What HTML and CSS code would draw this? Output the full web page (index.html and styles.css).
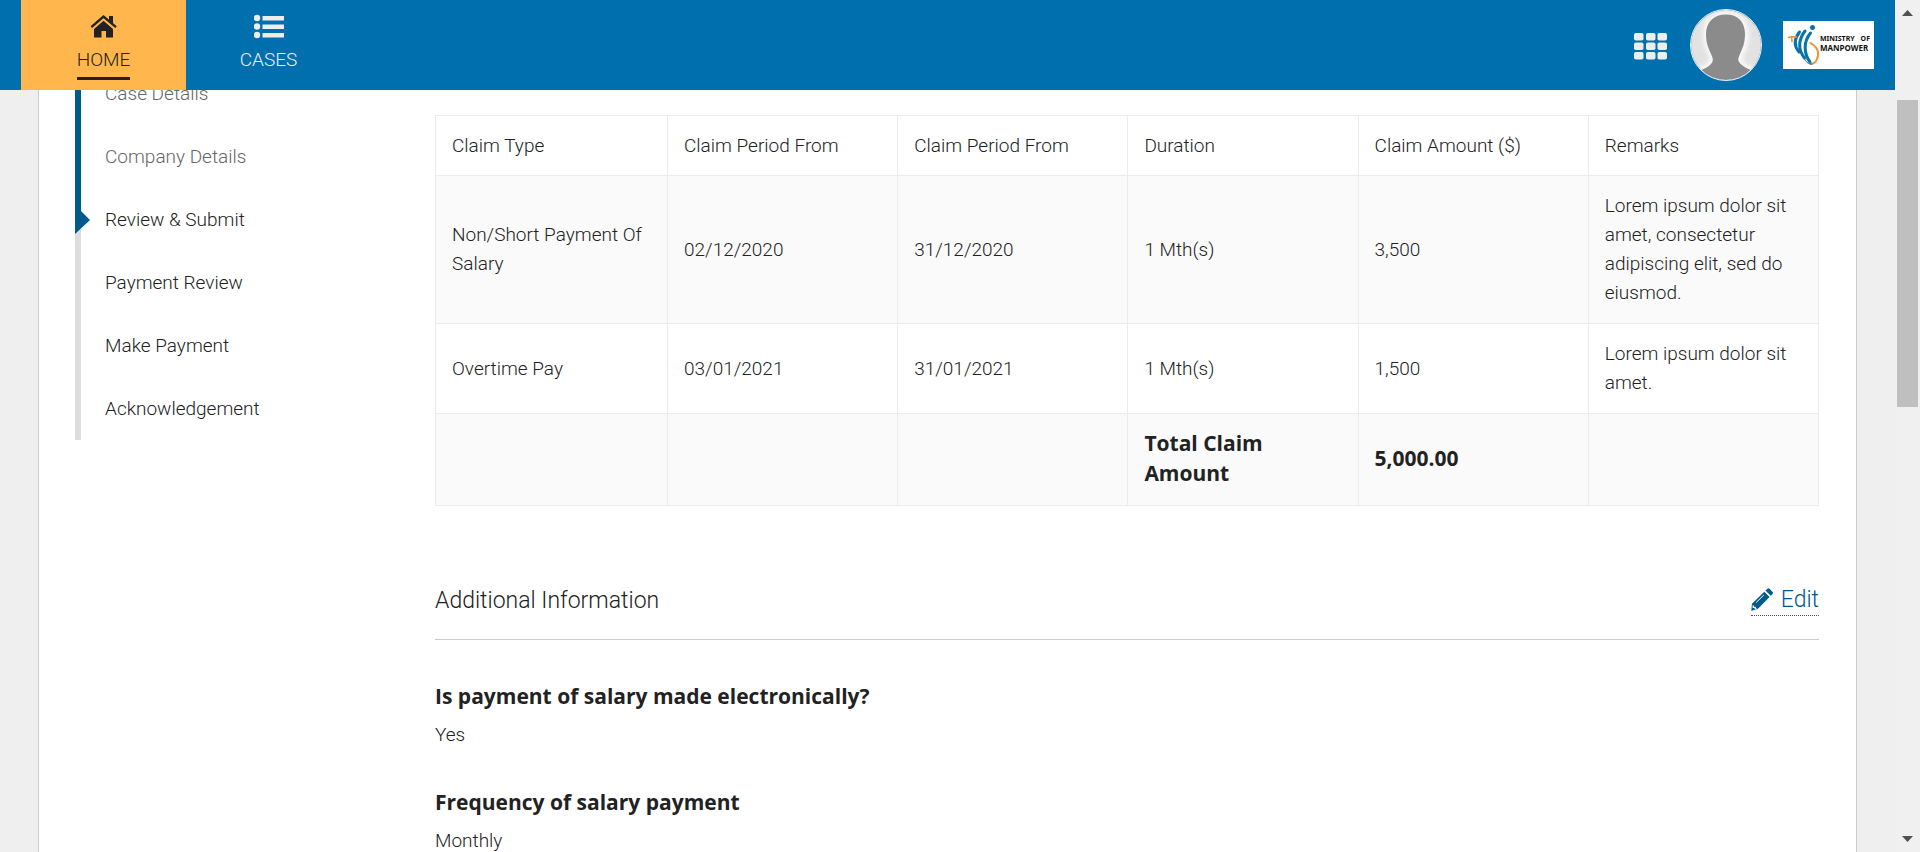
FILE: index.html
```html
<!DOCTYPE html>
<html lang="en">
<head>
<meta charset="utf-8">
<meta name="viewport" content="width=device-width, initial-scale=1">
<title>Review &amp; Submit</title>
<link rel="stylesheet" href="styles.css">
</head>
<body>
<div class="app">
  <header class="topbar">
    <nav class="tabs" aria-label="Main">
      <a class="tab tab-active" href="#home">
        <svg class="tab-icon" viewBox="0 0 30 26" aria-hidden="true"><path fill="currentColor" d="M20 3h4v8l-4-3.800zM5 16 14.500 7.800 24 16V24.500H17V18h-4.500v6.500H5z"/><path d="M2.300 14.200 14.500 3.700 27 14.200" fill="none" stroke="currentColor" stroke-width="2.400"/><path d="M3.500 16 14.500 6.400 25.500 16" fill="none" stroke="#ffb74d" stroke-width="1"/></svg>
        <span class="tab-label">HOME</span>
      </a>
      <a class="tab" href="#cases">
        <svg class="tab-icon" viewBox="0 0 30 26" aria-hidden="true"><g fill="currentColor"><circle cx="3" cy="5" r="3.200"/><circle cx="3" cy="13.500" r="3.200"/><circle cx="3" cy="22" r="3.200"/><path d="M8.500 3H30v4.500H8.500zM8.500 11.500H30V16H8.500zM8.500 20H30v4.500H8.500z"/></g></svg>
        <span class="tab-label">CASES</span>
      </a>
    </nav>
    <div class="tools">
      <button class="icon-button" type="button" aria-label="Applications">
        <svg class="grid-icon" viewBox="0 0 33 27" aria-hidden="true"><g fill="#ededed"><rect width="9.500" height="7.500" rx="1.800"/><rect x="12" width="9.500" height="7.500" rx="1.800"/><rect x="23.500" width="9.500" height="7.500" rx="1.800"/><rect y="9.500" width="9.500" height="7.500" rx="1.800"/><rect x="12" y="9.500" width="9.500" height="7.500" rx="1.800"/><rect x="23.500" y="9.500" width="9.500" height="7.500" rx="1.800"/><rect y="19" width="9.500" height="7.500" rx="1.800"/><rect x="12" y="19" width="9.500" height="7.500" rx="1.800"/><rect x="23.500" y="19" width="9.500" height="7.500" rx="1.800"/></g></svg>
      </button>
      <button class="icon-button" type="button" aria-label="Profile">
        <svg class="avatar" viewBox="0 0 72 72" aria-hidden="true">
          <defs><clipPath id="face"><circle cx="36" cy="36" r="35"/></clipPath><filter id="halo"><feGaussianBlur stdDeviation="2.500"/></filter></defs>
          <g clip-path="url(#face)"><rect width="72" height="72" fill="#e2e2e2"/>
          <path filter="url(#halo)" fill="none" stroke="#fff" stroke-width="5" d="M36 5.500C24 5.500 16 13 16 24c0 11 3 17 5 21 3 5 2 8-1 11-3 3-10 4-14 9v11h60V65c-4-5-11-6-14-9-3-3-4-6-1-11 2-4 5-10 5-21C55 13 48 5.500 36 5.500z"/>
          <path fill="#8b8b8b" d="M36 5.500C24 5.500 16 13 16 25c0 10 3 15 5 20 3 6 2 8-1 11-2 2-6 4-10 5.500V74h52V61.500c-4-1.500-8-3.500-10-5.500-4-3-5-5-2-11 2-5 5-10 5-20C55 13 48 5.500 36 5.500z"/></g>
          <circle cx="36" cy="36" r="35.500" fill="none" stroke="#f4f4f4"/>
        </svg>
      </button>
      <a class="brand" href="#ministry">
        <svg class="brand-mark" viewBox="0 0 33 44" aria-hidden="true">
          <g fill="none" stroke="#0873a8" stroke-linecap="round" stroke-width="3">
            <path d="M13.500 9C8 16 8 23 13 29"/><path d="M19 8C12 17 12 27 18.500 35"/><path d="M24.500 10C17 19 18 31 24 39"/>
          </g>
          <path d="M6 19c0-4 0-5-1-5.500M2 14.800c3-2 6-.5 9-1" fill="none" stroke="#ef9138" stroke-width="1.700"/>
          <path d="M24.500 20c7 4 9 10 6.500 16-1.500 4-5 5-6.500 5" fill="none" stroke="#ef9138" stroke-width="2" stroke-linecap="round"/>
          <path d="M17.500 34c2 5 5 7.500 9 7" fill="none" stroke="#0873a8" stroke-width="1"/>
          <circle cx="26.500" cy="4.500" r="2.500" fill="#0873a8"/>
        </svg>
        <span class="brand-text"><span class="brand-top"><span>MINISTRY</span><span>OF</span></span><span class="brand-name">MANPOWER</span></span>
      </a>
    </div>
  </header>

  <div class="panel">
    <nav class="side" aria-label="Progress">
      <ol class="steps">
        <li class="step step-done"><a href="#case">Case Details</a></li>
        <li class="step step-done"><a href="#company">Company Details</a></li>
        <li class="step step-current" aria-current="step"><a href="#review">Review &amp; Submit</a><svg class="pointer" viewBox="0 0 15 46" aria-hidden="true"><path fill="#005a8c" d="M0 0H6V23L15 32 0 46z"/></svg></li>
        <li class="step"><a href="#payment">Payment Review</a></li>
        <li class="step"><a href="#pay">Make Payment</a></li>
        <li class="step"><a href="#ack">Acknowledgement</a></li>
      </ol>
    </nav>
    <main class="content">
      <table class="claims">
        <thead>
          <tr><th scope="col">Claim Type</th><th scope="col">Claim Period From</th><th scope="col">Claim Period From</th><th scope="col">Duration</th><th scope="col">Claim Amount ($)</th><th scope="col">Remarks</th></tr>
        </thead>
        <tbody>
          <tr><td>Non/Short Payment Of Salary</td><td>02/12/2020</td><td>31/12/2020</td><td>1 Mth(s)</td><td>3,500</td><td>Lorem ipsum dolor sit amet, consectetur adipiscing elit, sed do eiusmod.</td></tr>
          <tr><td>Overtime Pay</td><td>03/01/2021</td><td>31/01/2021</td><td>1 Mth(s)</td><td>1,500</td><td>Lorem ipsum dolor sit amet.</td></tr>
          <tr class="total"><td></td><td></td><td></td><td>Total Claim Amount</td><td>5,000.00</td><td></td></tr>
        </tbody>
      </table>
      <section>
        <div class="section-head">
          <h2 class="section-title">Additional Information</h2>
          <a class="edit" href="#edit">
            <svg class="edit-icon" viewBox="0 0 22 23" aria-hidden="true"><path fill="#005a8c" d="M14.500 2.500 16.500.700q1-.900 2 0L21.600 4q.800 1 0 2L19.800 7.800zM13.300 3.700 18.600 9 6.500 21.200.300 22.700 1 15.800z"/><path d="M5.200 14.500 12.800 7" stroke="#fff" stroke-width="1"/><path d="M2.200 17.200v2.200h2v1.600h2" fill="none" stroke="#fff" stroke-width="1.200"/></svg>
            <span>Edit</span>
          </a>
        </div>
        <dl class="answers">
          <div class="answer"><dt>Is payment of salary made electronically?</dt><dd>Yes</dd></div>
          <div class="answer"><dt>Frequency of salary payment</dt><dd>Monthly</dd></div>
        </dl>
      </section>
    </main>
  </div>
</div>
<div class="scrollbar" aria-hidden="true">
  <svg class="arrow" viewBox="0 0 11 6"><path fill="#505050" d="M0 6 5.500 0 11 6z"/></svg>
  <div class="track"><div class="thumb"></div></div>
  <svg class="arrow" viewBox="0 0 11 6"><path fill="#505050" d="M0 0 5.500 6 11 0z"/></svg>
</div>
</body>
</html>
```
FILE: styles.css
```css
* {
  box-sizing: border-box;
}

body {
  margin: 0;
  display: flex;
  height: 100vh;
  overflow: hidden;
  background: #efefef;
  color: #222;
  font-family: Roboto, "Open Sans", sans-serif;
  font-size: 19px;
  font-weight: 300;
  line-height: 29px;
}

a {
  color: inherit;
  text-decoration: none;
}

.app {
  position: relative;
  flex: 1;
  min-width: 0;
  overflow: hidden;
}

.topbar {
  position: absolute;
  inset: 0 0 auto;
  z-index: 1;
  display: flex;
  justify-content: space-between;
  height: 90px;
  padding: 0 21px;
  background: #006fad;
}

.tabs,
.tools {
  display: flex;
}

.tab {
  display: flex;
  flex-direction: column;
  align-items: center;
  width: 165px;
  padding-top: 13px;
  color: #ededed;
}

.tab-active {
  background: #ffb74d;
  color: #222;
}

.tab-icon {
  width: 30px;
  height: 26px;
}

.tab-label {
  height: 41px;
  padding-top: 6px;
}

.tab-active .tab-label {
  border-bottom: 3px solid #222;
}

.tools {
  align-items: center;
  gap: 21px;
}

.icon-button {
  display: flex;
  padding: 0;
  border: 0;
  background: none;
}

.grid-icon {
  width: 33px;
  height: 27px;
  margin: 2px 2px 0 0;
}

.avatar {
  width: 72px;
  height: 72px;
}

.brand {
  display: flex;
  align-items: center;
  height: 48px;
  padding: 0 4px 0 3px;
  background: #fff;
  color: #111;
  font-family: "Noto Sans", sans-serif;
}

.brand-mark {
  width: 33px;
  height: 44px;
}

.brand-text {
  display: flex;
  flex-direction: column;
  width: 51px;
  padding: 0 0 4px 1px;
  font-size: 8px;
  font-weight: 700;
  line-height: 9px;
}

.brand-top {
  display: flex;
  justify-content: space-between;
  font-size: 7px;
  line-height: 8px;
}

.panel {
  display: flex;
  min-height: 100%;
  margin: 0 38px;
  padding: 0 37px 0 36px;
  border: solid #ccc;
  border-width: 0 1px;
  background: #fff;
}

.side {
  flex: 0 0 360px;
  padding-top: 62px;
}

.steps {
  margin: 0;
  padding: 0;
  list-style: none;
}

.step {
  position: relative;
  padding: 17px 0 17px 24px;
  border-left: 6px solid #ddd;
}

.step-done {
  border-color: #005a8c;
  color: #666;
}

.pointer {
  position: absolute;
  top: 0;
  left: -6px;
  width: 15px;
  height: 46px;
}

.content {
  flex: 1;
  min-width: 0;
  padding-top: 115px;
}

.claims {
  width: 100%;
  border-collapse: collapse;
  table-layout: fixed;
}

.claims th,
.claims td {
  padding: 15px 16px 16px;
  border: 1px solid #ececec;
  font-weight: 300;
  text-align: left;
}

.claims th {
  padding-bottom: 15px;
}

.claims th:first-child {
  width: 232px;
}

.claims tbody tr:nth-child(odd) {
  background: #fafafa;
}

.claims .total td {
  padding: 14px 16px 17px;
  font-family: "Open Sans", sans-serif;
  font-size: 21px;
  font-weight: 700;
  line-height: 30px;
}

.section-head {
  display: flex;
  align-items: flex-end;
  justify-content: space-between;
  margin-top: 78px;
  padding-bottom: 23px;
  border-bottom: 1px solid #ccc;
  font-size: 23px;
  line-height: 31px;
}

.section-title {
  margin: 0;
  font-size: inherit;
  font-weight: 300;
}

.edit {
  display: flex;
  align-items: center;
  gap: 8px;
  border-bottom: 1px dotted #555;
  color: #005a8c;
}

.edit-icon {
  width: 22px;
  height: 23px;
}

.answers {
  margin: 41px 0 0;
}

.answer {
  margin-bottom: 38px;
}

.answer dt {
  font-family: "Open Sans", sans-serif;
  font-size: 21px;
  font-weight: 700;
  line-height: 30px;
}

.answer dd {
  margin: 9px 0 0;
}

.scrollbar {
  display: flex;
  flex-direction: column;
  align-items: center;
  flex: 0 0 25px;
  padding: 10px 2px;
  background: #f0f0f0;
}

.arrow {
  width: 11px;
  height: 6px;
}

.track {
  flex: 1;
  align-self: stretch;
  padding-top: 84px;
}

.thumb {
  height: 307px;
  background: #bfbfbf;
}
```
